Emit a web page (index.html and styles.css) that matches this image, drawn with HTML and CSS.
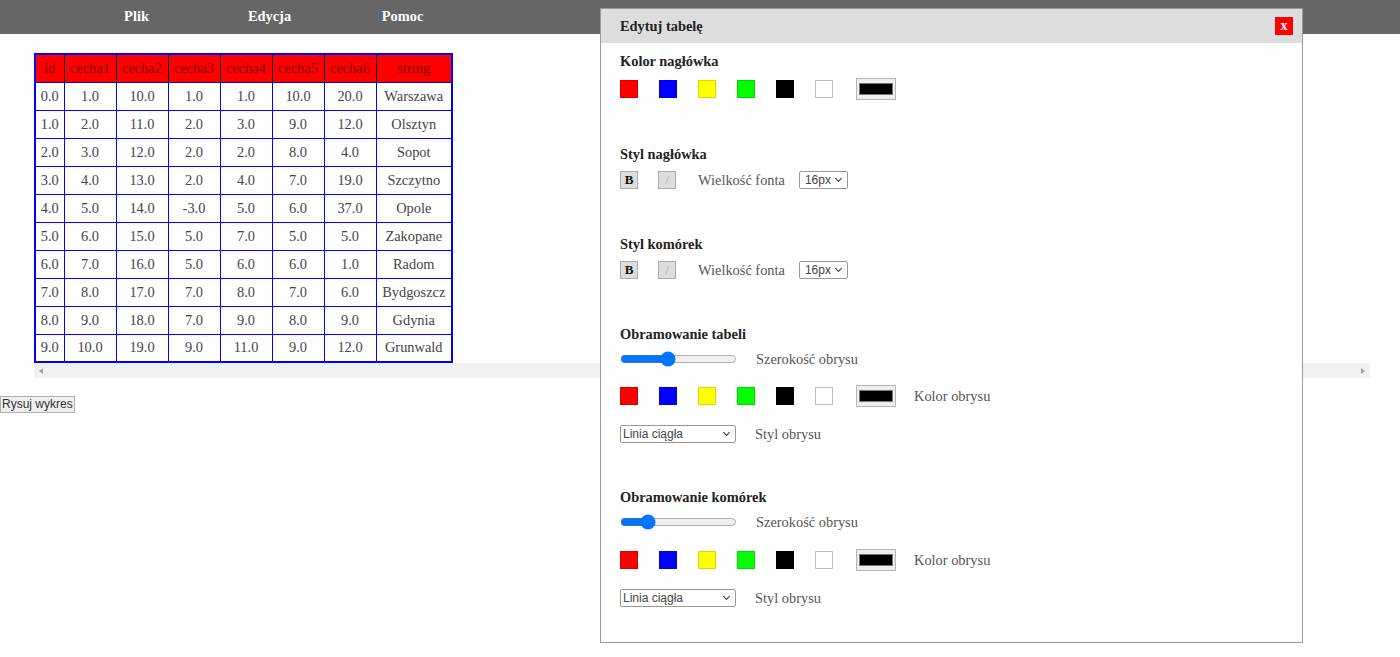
FILE: index.html
```html
<!DOCTYPE html>
<html lang="pl">
<head>
<meta charset="utf-8">
<title>Edytor tabeli</title>
<link rel="stylesheet" href="styles.css">
</head>
<body>
<nav class="menubar">
  <span class="menu-item">Plik</span>
  <span class="menu-item">Edycja</span>
  <span class="menu-item">Pomoc</span>
</nav>
<main class="content">
  <div class="table-wrap">
    <table class="data">
      <thead>
        <tr><th class="c-id">id</th><th class="c-n">cecha1</th><th class="c-n">cecha2</th><th class="c-n">cecha3</th><th class="c-n">cecha4</th><th class="c-n">cecha5</th><th class="c-n">cecha6</th><th class="c-s">string</th></tr>
      </thead>
      <tbody>
        <tr><td>0.0</td><td>1.0</td><td>10.0</td><td>1.0</td><td>1.0</td><td>10.0</td><td>20.0</td><td>Warszawa</td></tr>
        <tr><td>1.0</td><td>2.0</td><td>11.0</td><td>2.0</td><td>3.0</td><td>9.0</td><td>12.0</td><td>Olsztyn</td></tr>
        <tr><td>2.0</td><td>3.0</td><td>12.0</td><td>2.0</td><td>2.0</td><td>8.0</td><td>4.0</td><td>Sopot</td></tr>
        <tr><td>3.0</td><td>4.0</td><td>13.0</td><td>2.0</td><td>4.0</td><td>7.0</td><td>19.0</td><td>Szczytno</td></tr>
        <tr><td>4.0</td><td>5.0</td><td>14.0</td><td>-3.0</td><td>5.0</td><td>6.0</td><td>37.0</td><td>Opole</td></tr>
        <tr><td>5.0</td><td>6.0</td><td>15.0</td><td>5.0</td><td>7.0</td><td>5.0</td><td>5.0</td><td>Zakopane</td></tr>
        <tr><td>6.0</td><td>7.0</td><td>16.0</td><td>5.0</td><td>6.0</td><td>6.0</td><td>1.0</td><td>Radom</td></tr>
        <tr><td>7.0</td><td>8.0</td><td>17.0</td><td>7.0</td><td>8.0</td><td>7.0</td><td>6.0</td><td>Bydgoszcz</td></tr>
        <tr><td>8.0</td><td>9.0</td><td>18.0</td><td>7.0</td><td>9.0</td><td>8.0</td><td>9.0</td><td>Gdynia</td></tr>
        <tr><td>9.0</td><td>10.0</td><td>19.0</td><td>9.0</td><td>11.0</td><td>9.0</td><td>12.0</td><td>Grunwald</td></tr>
      </tbody>
    </table>
    <div class="hscroll"><span class="arrow arrow-left"></span><span class="arrow arrow-right"></span></div>
  </div>
  <button class="draw-btn" type="button">Rysuj wykres</button>
</main>

<section class="modal">
  <header class="modal-head">
    <h2 class="modal-title">Edytuj tabelę</h2>
    <button class="close" type="button">x</button>
  </header>
  <div class="modal-body">
    <div class="group g1">
      <h3 class="group-title">Kolor nagłówka</h3>
      <div class="row row-colors">
        <span class="swatch sw-red"></span><span class="swatch sw-blue"></span><span class="swatch sw-yellow"></span><span class="swatch sw-green"></span><span class="swatch sw-black"></span><span class="swatch sw-white"></span>
        <span class="picker"><span class="picker-fill"></span></span>
      </div>
    </div>

    <div class="group g2">
      <h3 class="group-title">Styl nagłówka</h3>
      <div class="row row-style">
        <button class="fmt fmt-b" type="button">B</button>
        <button class="fmt fmt-i" type="button">/</button>
        <span class="label lbl-font">Wielkość fonta</span>
        <span class="sel-wrap sel-size"><select class="sel"><option>16px</option></select></span>
      </div>
    </div>

    <div class="group g3">
      <h3 class="group-title">Styl komórek</h3>
      <div class="row row-style">
        <button class="fmt fmt-b" type="button">B</button>
        <button class="fmt fmt-i" type="button">/</button>
        <span class="label lbl-font">Wielkość fonta</span>
        <span class="sel-wrap sel-size"><select class="sel"><option>16px</option></select></span>
      </div>
    </div>

    <div class="group g4">
      <h3 class="group-title">Obramowanie tabeli</h3>
      <div class="row row-slider">
        <input class="range" type="range" min="0" max="5" value="2">
        <span class="label">Szerokość obrysu</span>
      </div>
      <div class="row row-colors row-colors-b">
        <span class="swatch sw-red"></span><span class="swatch sw-blue"></span><span class="swatch sw-yellow"></span><span class="swatch sw-green"></span><span class="swatch sw-black"></span><span class="swatch sw-white"></span>
        <span class="picker"><span class="picker-fill"></span></span>
        <span class="label lbl-color">Kolor obrysu</span>
      </div>
      <div class="row row-select">
        <span class="sel-wrap sel-line"><select class="sel"><option>Linia ciągła</option></select></span>
        <span class="label">Styl obrysu</span>
      </div>
    </div>

    <div class="group g5">
      <h3 class="group-title">Obramowanie komórek</h3>
      <div class="row row-slider">
        <input class="range" type="range" min="0" max="5" value="1">
        <span class="label">Szerokość obrysu</span>
      </div>
      <div class="row row-colors row-colors-b row-colors-c">
        <span class="swatch sw-red"></span><span class="swatch sw-blue"></span><span class="swatch sw-yellow"></span><span class="swatch sw-green"></span><span class="swatch sw-black"></span><span class="swatch sw-white"></span>
        <span class="picker"><span class="picker-fill"></span></span>
        <span class="label lbl-color">Kolor obrysu</span>
      </div>
      <div class="row row-select">
        <span class="sel-wrap sel-line"><select class="sel"><option>Linia ciągła</option></select></span>
        <span class="label">Styl obrysu</span>
      </div>
    </div>
  </div>
</section>
</body>
</html>
```

FILE: styles.css
```css
* { box-sizing: border-box; }

body {
  margin: 0;
  background: #fff;
  color: #444;
  font-family: "Liberation Serif", "Times New Roman", serif;
}

/* top menu */
.menubar {
  height: 34px;
  background: #666;
  display: flex;
  padding-left: 70px;
}
.menu-item {
  width: 133px;
  text-align: center;
  color: #fff;
  font-weight: bold;
  font-size: 14.4px;
  line-height: 33px;
}

/* table area */
.content { padding-top: 19px; }
.table-wrap {
  margin-left: 34px;
  width: 1336px;
}
.data {
  border-collapse: collapse;
  border: 2px solid #00f;
  font-size: 14.4px;
  color: #444;
}
.data th {
  background: #f00;
  color: #7a0000;
  font-weight: normal;
  height: 28px;
  padding: 0;
  border-left: 1px solid #000;
  border-right: 1px solid #000;
  border-bottom: 1px solid #00f;
  text-align: center;
}
.data th.c-id { width: 29px; }
.data th.c-n { width: 52px; }
.data th.c-s { width: 76px; }
.data td {
  border: 1px solid #00f;
  height: 28px;
  padding: 0;
  text-align: center;
}

.hscroll {
  height: 15px;
  background: #f1f1f1;
  display: flex;
  align-items: center;
  justify-content: space-between;
  padding: 0 5px;
}
.arrow {
  width: 0;
  height: 0;
  border-top: 3px solid transparent;
  border-bottom: 3px solid transparent;
}
.arrow-left { border-right: 4px solid #a3a3a3; }
.arrow-right { border-left: 4px solid #a3a3a3; }

.draw-btn {
  display: block;
  margin-top: 18px;
  height: 17px;
  padding: 0 1px;
  font-family: "Liberation Sans", Arial, sans-serif;
  font-size: 12px;
  line-height: 15px;
  color: #333;
  background: #efefef;
  border: 1px solid #b0b0b0;
  border-radius: 0;
}

/* modal */
.modal {
  position: absolute;
  left: 600px;
  top: 8px;
  width: 703px;
  height: 635px;
  background: #fff;
  border: 1px solid #9a9a9a;
}
.modal-head {
  height: 34px;
  background: #ddd;
  display: flex;
  align-items: center;
  justify-content: space-between;
  padding: 0 9px 0 19px;
}
.modal-title {
  margin: 0;
  font-size: 14.4px;
  font-weight: bold;
  color: #222;
}
.close {
  width: 18px;
  height: 18px;
  padding: 0;
  border: none;
  background: #f00;
  color: #fff;
  font-family: "Liberation Serif", serif;
  font-weight: bold;
  font-size: 14px;
  line-height: 16px;
}

.modal-body { padding: 9px 19px 0; }
.group-title {
  margin: 0;
  font-size: 14.4px;
  line-height: 18px;
  font-weight: bold;
  color: #222;
}
.g1 { margin-bottom: 45px; }
.g2, .g3 { margin-bottom: 46px; }
.g4 { margin-bottom: 45px; }

.row {
  display: flex;
  align-items: center;
}
.row-colors { height: 22px; margin-top: 8px; gap: 21px; }
.row-style { height: 18px; margin-top: 8px; }
.row-slider { height: 18px; margin-top: 7px; }
.row-colors-b { margin-top: 17px; }
.row-colors-c { margin-top: 18px; }
.row-select { height: 18px; margin-top: 18px; }

.label {
  font-size: 14.4px;
  color: #555;
  white-space: nowrap;
}

.swatch {
  width: 18px;
  height: 18px;
  border: 1px solid rgba(0, 0, 0, 0.15);
}
.sw-red { background: #f00; }
.sw-blue { background: #00f; }
.sw-yellow { background: #ff0; }
.sw-green { background: #0f0; }
.sw-black { background: #000; }
.sw-white { background: #fff; border-color: #bbb; }

.picker {
  width: 40px;
  height: 22px;
  margin-left: 2px;
  padding: 4px 2px;
  background: #efefef;
  border: 1px solid #b5b5b5;
  display: flex;
}
.picker-fill {
  flex: 1;
  background: #000;
  border: 1px solid #777;
}
.lbl-color { margin-left: -3px; }

.fmt {
  width: 18px;
  height: 18px;
  padding: 0;
  background: #ddd;
  border: 1px solid #aaa;
  font-family: "Liberation Serif", serif;
  font-size: 13px;
  line-height: 16px;
}
.fmt-b { font-weight: bold; color: #111; }
.fmt-i { color: #aaa; margin-left: 20px; }
.lbl-font { margin-left: 22px; }

/* selects */
.sel-wrap {
  position: relative;
  display: block;
  height: 18px;
}
.sel-wrap::after {
  content: "";
  position: absolute;
  right: 7px;
  top: 5px;
  width: 4px;
  height: 4px;
  border-right: 1.5px solid #333;
  border-bottom: 1.5px solid #333;
  transform: rotate(45deg);
  pointer-events: none;
}
.sel {
  -webkit-appearance: none;
  appearance: none;
  display: block;
  width: 100%;
  height: 18px;
  margin: 0;
  padding: 0 0 0 5px;
  font-family: "Liberation Sans", Arial, sans-serif;
  font-size: 12px;
  line-height: 16px;
  color: #444;
  background: #fff;
  border: 1px solid #999;
  border-radius: 2px;
}
.sel-line .sel { padding-left: 2px; }
.sel-size { width: 49px; margin-left: 14px; }
.sel-line { width: 116px; margin-right: 19px; }

.range {
  width: 117px;
  height: 18px;
  margin: 0 19px 0 0;
}
```
